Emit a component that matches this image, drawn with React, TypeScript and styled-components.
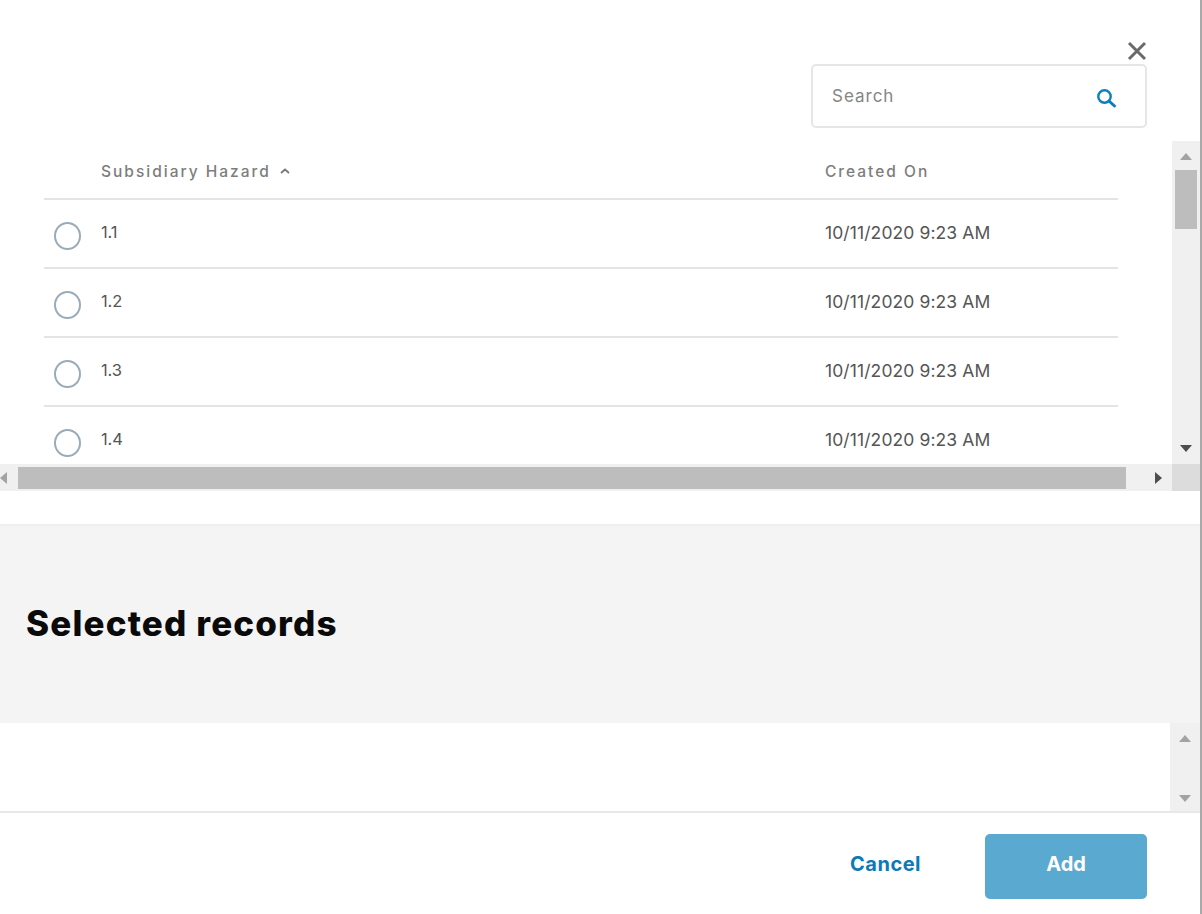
import React from 'react';
import styled, { createGlobalStyle } from 'styled-components';

const GlobalStyle = createGlobalStyle`
  html, body {
    margin: 0;
    padding: 0;
    background: #fff;
    font-family: Inter, "Liberation Sans", sans-serif;
  }
  * {
    box-sizing: border-box;
  }
`;

const rows = ['1.1', '1.2', '1.3', '1.4'];

const App: React.FC = () => (
  <Dialog>
    <GlobalStyle />
    <TopBar>
      <CloseButton aria-label="Close">
        <svg width="20" height="20" viewBox="0 0 20 20">
          <path d="M2 2 L18 18 M18 2 L2 18" stroke="#6a6a6a" strokeWidth="3" fill="none" />
        </svg>
      </CloseButton>
      <SearchBox>
        <SearchInput placeholder="Search" />
        <svg width="22" height="22" viewBox="0 0 22 22">
          <circle cx="9.5" cy="9.5" r="6.2" stroke="#0a7fbd" strokeWidth="2.4" fill="none" />
          <path d="M14 14 L19.5 19" stroke="#0a7fbd" strokeWidth="3" strokeLinecap="round" />
        </svg>
      </SearchBox>
    </TopBar>

    <TableArea>
      <TableViewport>
        <HeaderRow>
          <span />
          <HeaderCell>
            Subsidiary Hazard
            <svg width="12" height="8" viewBox="0 0 12 8">
              <path d="M2 6 L6 2.5 L10 6" stroke="#777" strokeWidth="1.8" fill="none" />
            </svg>
          </HeaderCell>
          <HeaderCell>Created On</HeaderCell>
        </HeaderRow>
        {rows.map((row) => (
          <DataRow key={row}>
            <Radio />
            <NumberCell>{row}</NumberCell>
            <DateCell>10/11/2020 9:23 AM</DateCell>
          </DataRow>
        ))}
      </TableViewport>
      <VerticalTrack>
        <ArrowButton $pad="2px 0 0">
          <Arrow $dir="up" $color="#a3a3a3" />
        </ArrowButton>
        <VerticalThumb />
        <TrackSpacer />
        <ArrowButton $pad="0 0 3px">
          <Arrow $dir="down" $color="#4d4d4d" />
        </ArrowButton>
      </VerticalTrack>
      <HorizontalTrack>
        <SideButton>
          <Arrow $dir="left" $color="#a3a3a3" />
        </SideButton>
        <HorizontalThumb />
        <SideButton $end>
          <Arrow $dir="right" $color="#4d4d4d" />
        </SideButton>
      </HorizontalTrack>
      <Corner />
    </TableArea>

    <Gap />

    <SelectedHeader>
      <SelectedTitle>Selected records</SelectedTitle>
    </SelectedHeader>

    <SelectedList>
      <ListTrack>
        <Arrow $dir="up" $color="#a3a3a3" />
        <Arrow $dir="down" $color="#a3a3a3" />
      </ListTrack>
    </SelectedList>

    <Footer>
      <CancelButton>Cancel</CancelButton>
      <AddButton>Add</AddButton>
    </Footer>
  </Dialog>
);

const Dialog = styled.div`
  width: 1202px;
  height: 914px;
  overflow: hidden;
  background: #fff;
  border-right: 2px solid #a9a9a9;
  display: flex;
  flex-direction: column;
`;

const TopBar = styled.div`
  height: 141px;
  padding: 41px 54px 0 0;
  display: flex;
  flex-direction: column;
  align-items: flex-end;
`;

const CloseButton = styled.button`
  width: 20px;
  height: 20px;
  margin: 0 -1px 4px 0;
  padding: 0;
  border: none;
  background: transparent;
  display: flex;
`;

const SearchBox = styled.div`
  width: 336px;
  height: 64px;
  margin: -1px -1px 0 0;
  border: 2px solid #e6e6e6;
  border-radius: 5px;
  padding: 0 28px 0 19px;
  display: flex;
  align-items: center;
  justify-content: space-between;

  svg {
    margin-top: 3px;
  }
`;

const SearchInput = styled.input`
  width: 200px;
  border: none;
  outline: none;
  padding: 0;
  font: 17px Inter, "Liberation Sans", sans-serif;
  letter-spacing: 1px;

  &::placeholder {
    color: #858585;
    opacity: 1;
  }
`;

const TableArea = styled.div`
  height: 350px;
  display: grid;
  grid-template-columns: 1172px 28px;
  grid-template-rows: 323px 27px;
`;

const TableViewport = styled.div`
  overflow: hidden;
  padding: 0 54px 0 44px;
`;

const HeaderRow = styled.div`
  height: 59px;
  display: grid;
  grid-template-columns: 57px 724px 1fr;
  align-items: center;
  border-bottom: 2px solid #e4e4e4;
  padding-top: 3px;
`;

const HeaderCell = styled.div`
  display: flex;
  align-items: center;
  gap: 8px;
  font-size: 15.5px;
  font-weight: 500;
  letter-spacing: 2px;
  color: #7d7d7d;
`;

const DataRow = styled.div`
  height: 69px;
  display: grid;
  grid-template-columns: 57px 724px 1fr;
  align-items: center;
  border-bottom: 2px solid #e4e4e4;
`;

const Radio = styled.span`
  width: 27px;
  height: 28px;
  margin: 5px 0 0 10px;
  border: 2px solid #9aabb9;
  border-radius: 50%;
  background: #fff;
`;

const NumberCell = styled.div`
  font-size: 16.5px;
  letter-spacing: -0.1px;
  color: #555;
  margin-top: -4px;
`;

const DateCell = styled.div`
  font-size: 17.5px;
  letter-spacing: 0.1px;
  color: #555;
  margin-top: -3px;
  white-space: nowrap;
`;

const VerticalTrack = styled.div`
  background: #f0f0f0;
  display: flex;
  flex-direction: column;
  align-items: center;
`;

const ArrowButton = styled.div<{ $pad: string }>`
  height: 29px;
  width: 100%;
  flex-shrink: 0;
  padding: ${(p) => p.$pad};
  display: flex;
  align-items: center;
  justify-content: center;
`;

const VerticalThumb = styled.div`
  width: 22px;
  height: 59px;
  background: #bdbdbd;
  flex-shrink: 0;
`;

const TrackSpacer = styled.div`
  flex: 1;
`;

const HorizontalTrack = styled.div`
  background: #f0f0f0;
  display: flex;
  align-items: center;
`;

const SideButton = styled.div<{ $end?: boolean }>`
  width: ${(p) => (p.$end ? '46px' : '18px')};
  height: 100%;
  display: flex;
  align-items: center;
  justify-content: ${(p) => (p.$end ? 'center' : 'flex-start')};
  padding-left: ${(p) => (p.$end ? '19px' : '0')};
`;

const HorizontalThumb = styled.div`
  width: 1108px;
  height: 22px;
  background: #bdbdbd;
`;

const Corner = styled.div`
  background: #dcdcdc;
`;

const Arrow = styled.span<{ $dir: 'up' | 'down' | 'left' | 'right'; $color: string }>`
  width: 0;
  height: 0;
  border-style: solid;
  border-color: transparent;
  ${(p) =>
    p.$dir === 'up'
      ? `border-width: 0 6px 7px 6px; border-bottom-color: ${p.$color};`
      : p.$dir === 'down'
      ? `border-width: 7px 6px 0 6px; border-top-color: ${p.$color};`
      : p.$dir === 'left'
      ? `border-width: 6px 7px 6px 0; border-right-color: ${p.$color};`
      : `border-width: 6px 0 6px 7px; border-left-color: ${p.$color};`}
`;

const Gap = styled.div`
  height: 33px;
`;

const SelectedHeader = styled.div`
  height: 199px;
  background: #f4f4f4;
  border-top: 2px solid #eeeeee;
  padding: 0 0 4px 26px;
  display: flex;
  align-items: center;
`;

const SelectedTitle = styled.h2`
  margin: 0;
  font-size: 35px;
  font-weight: 800;
  letter-spacing: 1.15px;
  color: #0a0a0a;
`;

const SelectedList = styled.div`
  height: 90px;
  display: flex;
  justify-content: flex-end;
  border-bottom: 2px solid #e8e8e8;
`;

const ListTrack = styled.div`
  width: 30px;
  background: #f0f0f0;
  display: flex;
  flex-direction: column;
  align-items: center;
  justify-content: space-between;
  padding: 12px 0 9px;
`;

const Footer = styled.div`
  flex: 1;
  padding: 21px 54px 0 0;
  display: flex;
  justify-content: flex-end;
  align-items: flex-start;
  gap: 64px;
`;

const CancelButton = styled.button`
  height: 60px;
  padding: 0;
  border: none;
  background: transparent;
  color: #0a7ab8;
  font: 700 20px Inter, "Liberation Sans", sans-serif;
  letter-spacing: 0.5px;
`;

const AddButton = styled.button`
  width: 162px;
  height: 65px;
  margin-right: -1px;
  padding: 0 0 5px;
  border: none;
  border-radius: 5px;
  background: #5aa9d1;
  color: #fff;
  font: 700 20px Inter, "Liberation Sans", sans-serif;
`;

export default App;
